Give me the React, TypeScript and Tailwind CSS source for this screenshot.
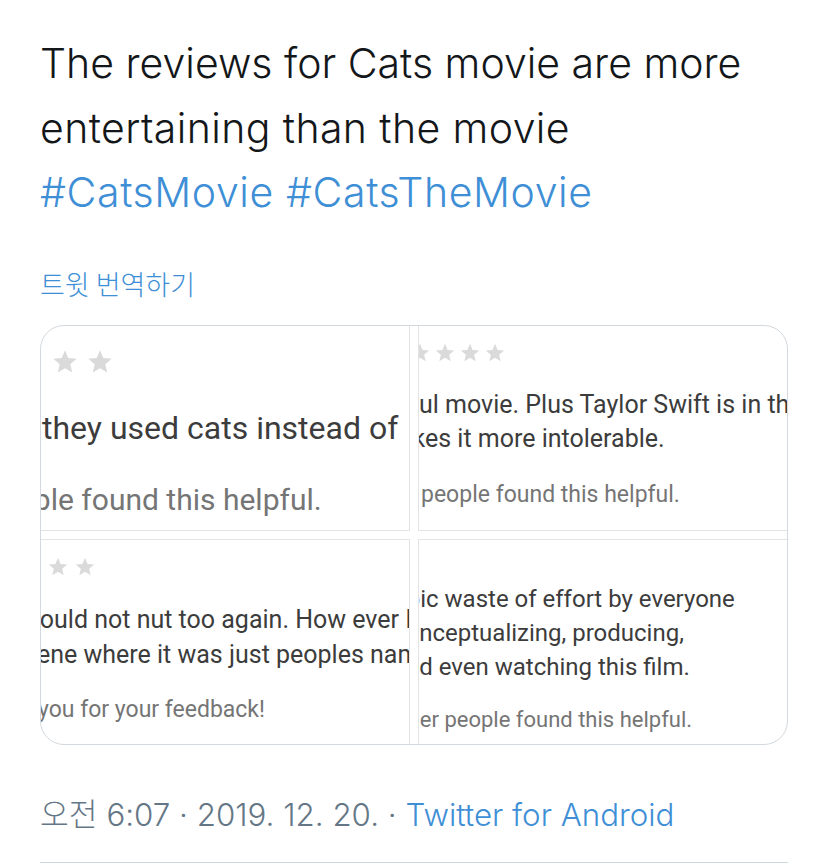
const Star = ({ size }: { size: number }) => (
	<svg width={size} height={size} viewBox="0 0 24 24" className="shrink-0">
		<path
			d="M12 17.27L18.18 21l-1.64-7.03L22 9.24l-7.19-.61L12 2 9.19 8.63 2 9.24l5.46 4.73L5.82 21z"
			fill="#dadada"
		/>
	</svg>
)

const roboto = { fontFamily: "Roboto, 'Liberation Sans', sans-serif" }

export default function App() {
	return (
		<div className="w-[828px] h-[864px] bg-white overflow-hidden px-10 font-['Inter','Noto_Sans_CJK_KR',sans-serif]">
			{/* Tweet body */}
			<div className="pt-[31px] text-[41px] leading-[64.5px] text-[#14171a] font-light">
				<p className="tracking-[0px]">The reviews for Cats movie are more</p>
				<p className="tracking-[0.4px]">entertaining than the movie</p>
				<p className="text-[#3f8fd6] tracking-[0.6px]">#CatsMovie #CatsTheMovie</p>
			</div>
			<p className="mt-[43px] text-[27px] leading-[32px] text-[#3f8fd6] font-light font-['Noto_Sans_CJK_KR',sans-serif]">
				트윗 번역하기
			</p>

			{/* Image grid */}
			<div
				className="mt-[25px] h-[420px] rounded-[24px] border border-[#d3d9de] overflow-hidden grid grid-cols-2 grid-rows-2 gap-2 text-[#3c3c3c]"
				style={roboto}>
				{/* top left */}
				<div className="overflow-hidden border-r border-b border-[#e3e3e3] flex flex-col pt-[22px] whitespace-nowrap">
					<div className="flex gap-[7px] ml-[10px] h-[28px]">
						<Star size={28} />
						<Star size={28} />
					</div>
					<p className="mt-[32px] text-[32px] leading-[40px] ml-[1px]">
						they used cats instead of
					</p>
					<p className="mt-[34px] text-[30px] leading-[36px] -ml-[57px] text-[#757575]">
						people found this helpful.
					</p>
				</div>
				{/* top right */}
				<div className="overflow-hidden border-l border-b border-[#e3e3e3] flex flex-col pt-[16px] whitespace-nowrap">
					<div className="flex gap-[3px] -ml-[10px] h-[22px]">
						<Star size={22} />
						<Star size={22} />
						<Star size={22} />
						<Star size={22} />
					</div>
					<div className="mt-[24px] text-[25px] leading-[34px]">
						<p>ul movie. Plus Taylor Swift is in the</p>
						<p className="-ml-[42px]">makes it more intolerable.</p>
					</div>
					<p className="mt-[23px] text-[23px] leading-[32px] ml-[2px] text-[#757575]">
						people found this helpful.
					</p>
				</div>
				{/* bottom left */}
				<div className="overflow-hidden border-r border-t border-[#e3e3e3] flex flex-col pt-[16px] whitespace-nowrap">
					<div className="flex gap-[5px] ml-[6px] h-[22px]">
						<Star size={22} />
						<Star size={22} />
					</div>
					<div className="mt-[24px] text-[25px] leading-[35px]">
						<p className="-ml-[20px]">would not nut too again. How ever I</p>
						<p className="-ml-[30px]">scene where it was just peoples names</p>
					</div>
					<p className="mt-[22px] text-[23px] leading-[32px] -ml-[72px] text-[#757575]">
						Thank you for your feedback!
					</p>
				</div>
				{/* bottom right */}
				<div className="overflow-hidden border-l border-t border-[#e3e3e3] flex flex-col pt-[42px] whitespace-nowrap">
					<div className="text-[24px] leading-[34px]">
						<p className="-ml-[25px]">epic waste of effort by everyone</p>
						<p className="-ml-[26px]">conceptualizing, producing,</p>
						<p className="-ml-[26px]">and even watching this film.</p>
					</div>
					<p className="mt-[21px] text-[22px] leading-[30px] -ml-[31px] text-[#757575]">
						other people found this helpful.
					</p>
				</div>
			</div>

			{/* Meta */}
			<p className="mt-[50px] text-[31.3px] leading-[40px] text-[#657786] font-light">
				오전 6:07 · 2019. 12. 20. ·{" "}
				<span className="text-[#3f8fd6]">Twitter for Android</span>
			</p>
			<div className="mt-[27px] h-px bg-[#ccd6dd]" />
		</div>
	)
}
